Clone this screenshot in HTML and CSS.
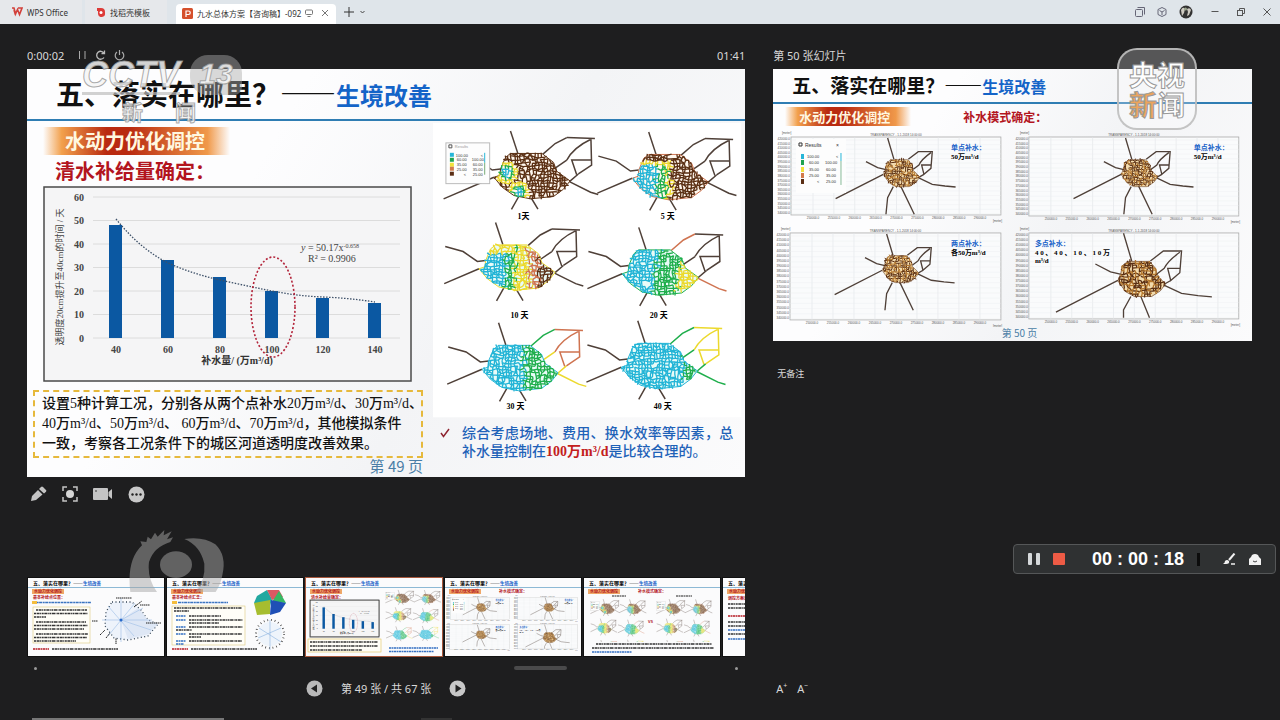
FILE: index.html
```html
<!DOCTYPE html>
<html lang="zh-CN">
<head>
  <meta charset="UTF-8" />
  <meta name="viewport" content="width=device-width, initial-scale=1.0"/>
  <title>WPS Office</title>
  <link rel="stylesheet" href="styles.css">
</head>
<body>
  <header class="topbar">
    <a class="tab" href="#">
      <svg width="12" height="10" viewBox="0 0 12 10" fill="none" stroke="#d2403a" stroke-width="1.6"><path d="M1 1h2l1.500 6L6.500 2.500 8.500 7.500 11 1H7M3 3l1.500 5"/></svg>
      <span>WPS Office</span>
    </a>
    <a class="tab" href="#">
      <svg width="10" height="10" viewBox="0 0 10 10"><path d="M1 1h4a4 4 0 0 1 4 4v1a3.500 3.500 0 0 1-7 1V4H1z" fill="#dd3b38"/><circle cx="5" cy="5.500" r="1.500" fill="#fff"/></svg>
      <span>找稻壳模板</span>
    </a>
    <a class="tab active" href="#">
      <svg width="11" height="11" viewBox="0 0 11 11"><rect width="11" height="11" rx="1.500" fill="#d5502c"/><path d="M4 9V3h2.500a1.700 1.700 0 0 1 0 3.500H4" fill="none" stroke="#fff" stroke-width="1.200"/></svg>
      <span>九水总体方案【咨询稿】-092</span>
      <svg width="8" height="8" viewBox="0 0 8 8" fill="none" stroke="#777"><rect x="0.500" y="1" width="7" height="4.500" rx="1"/><path d="M2.500 7.500h3"/></svg>
      <svg class="tab-close" width="6" height="6" viewBox="0 0 6 6" stroke="#777"><path d="M0 0l6 6M6 0L0 6"/></svg>
    </a>
    <button class="bar-btn" aria-label="新建"><svg width="10" height="10" viewBox="0 0 10 10" stroke="#333"><path d="M5 0v10M0 5h10"/></svg></button>
    <button class="bar-btn" aria-label="更多"><svg width="5" height="4" viewBox="0 0 5 4" fill="none" stroke="#444"><path d="M0.500 1l2 2 2-2"/></svg></button>
    <div class="window-btns">
      <button class="bar-btn" aria-label="窗口"><svg width="10" height="10" viewBox="0 0 10 10" fill="none" stroke="#667"><rect x="0.500" y="2.500" width="7" height="7" rx="1"/><path d="M2.500 0.500h7v7"/></svg></button>
      <button class="bar-btn" aria-label="应用"><svg width="10" height="10" viewBox="0 0 10 10" fill="none" stroke="#667"><path d="M5 0.500l4 2v5l-4 2-4-2v-5zM2.500 3.500L5 5l2.500-1.500M5 5v3"/></svg></button>
      <button class="bar-btn" aria-label="账号"><svg width="14" height="14" viewBox="0 0 14 14"><circle cx="7" cy="7" r="6.500" fill="#333"/><path d="M2 5q2-4 4-1l-1 4-2 3zM8 4q3-2 4 1l-2 5-2 1 1-4z" fill="#cfcbc2"/><circle cx="6.500" cy="4" r="1.500" fill="#9aa58c"/></svg></button>
      <button class="bar-btn" aria-label="最小化"><svg width="8" height="8" viewBox="0 0 8 8" stroke="#555"><path d="M0.500 3.500h7"/></svg></button>
      <button class="bar-btn" aria-label="还原"><svg width="8" height="8" viewBox="0 0 8 8" fill="none" stroke="#555"><rect x="0.500" y="2.500" width="5" height="5"/><path d="M2.500 2.500v-2h5v5h-2"/></svg></button>
      <button class="bar-btn" aria-label="关闭"><svg width="8" height="8" viewBox="0 0 8 8" stroke="#555"><path d="M0.500 0.500l7 7M7.500 0.500l-7 7"/></svg></button>
    </div>
  </header>

  <main class="presenter">
    <section class="current">
      <div class="status">
        <span>0:00:02</span>
        <button class="icon-btn" aria-label="暂停"><svg width="9" height="10" viewBox="0 0 9 10" stroke="#aaa" fill="none"><path d="M1.500 1v8M7 1v8"/></svg></button>
        <button class="icon-btn" aria-label="重置"><svg width="11" height="10" viewBox="0 0 11 10" stroke="#bbb" stroke-width="1.300" fill="none"><path d="M9 7.500A4 4 0 1 1 9 3M9.500 0.500v3h-3"/></svg></button>
        <button class="icon-btn" aria-label="结束"><svg width="11" height="11" viewBox="0 0 11 11" stroke="#aaa" stroke-width="1.200" fill="none"><path d="M3 2a4.300 4.300 0 1 0 5 0M5.500 0v5"/></svg></button>
        <span class="clock">01:41</span>
      </div>

      <article class="slide">
        <h1 class="slide-title">五、落实在哪里？——<span>生境改善</span></h1>
        <div class="slide-body">
          <div class="col-left">
            <h2 class="banner">水动力优化调控</h2>
            <h3 class="subhead">清水补给量确定：</h3>
            <svg class="chart" viewBox="0 0 369 196">
              <g id="chart">
                <rect x="1" y="1" width="367" height="194" fill="#f5f5f6" stroke="#4a4a4a" stroke-width="1.500"/>
                <path d="M50 11h307M50 34.500h307M50 58h307M50 81.500h307M50 105h307M50 128.500h307M50 152h307" stroke="#dcdcdc"/>
                <g fill="#0b58a2">
                  <rect x="66" y="39" width="13" height="113"/>
                  <rect x="118" y="74" width="13" height="78"/>
                  <rect x="170" y="91" width="13" height="61"/>
                  <rect x="222" y="105" width="13" height="47"/>
                  <rect x="273" y="112" width="13" height="40"/>
                  <rect x="325" y="117" width="13" height="35"/>
                </g>
                <path d="M73 33Q96 62 125 77Q150 88 177 94T229 105T280 111T332 116" fill="none" stroke="#3d5068" stroke-width="1.300" stroke-dasharray="1.500 1.500"/>
                <ellipse cx="230" cy="121" rx="22" ry="50" fill="none" stroke="#b3243a" stroke-width="1.600" stroke-dasharray="2 2"/>
                <g class="ticks" text-anchor="end">
                  <text x="41" y="15">60</text><text x="41" y="38">50</text><text x="41" y="62">40</text><text x="41" y="85">30</text><text x="41" y="109">20</text><text x="41" y="132">10</text><text x="41" y="156">0</text>
                </g>
                <g class="ticks" text-anchor="middle">
                  <text x="73" y="167">40</text><text x="125" y="167">60</text><text x="177" y="167">80</text><text x="229" y="167">100</text><text x="280" y="167">120</text><text x="332" y="167">140</text>
                </g>
                <text class="formula" x="258" y="65"><tspan font-style="italic">y</tspan> = 50.17x<tspan dy="-3" font-size="6">-0.658</tspan></text>
                <text class="formula" x="265" y="76">R² = 0.9906</text>
                <text class="axis-x" x="194" y="178" text-anchor="middle">补水量/ (万m³/d)</text>
                <text class="axis-y" text-anchor="middle" transform="translate(20 91) rotate(-90)">透明度20cm提升至40cm的时间 / 天</text>
              </g>
            </svg>
            <p class="note">设置5种计算工况，分别各从两个点补水20万m³/d、30万m³/d、<br>40万m³/d、50万m³/d、 60万m³/d、70万m³/d，其他模拟条件<br>一致，考察各工况条件下的城区河道透明度改善效果。</p>
            <p class="page-no">第 49 页</p>
          </div>
          <div class="col-right">
            <svg class="maps" viewBox="0 0 316 300">
              <rect x="2" y="2" width="310" height="296" fill="#fff"/>
              <g id="maps">
                <g class="river-map" data-day="1" transform="scale(.333)"></g>
                <g class="river-map" data-day="5" transform="translate(139 1) scale(.333)"></g>
                <g class="river-map" data-day="10" transform="translate(-15 92) scale(.333)"></g>
                <g class="river-map" data-day="20" transform="translate(129 97) scale(.333)"></g>
                <g class="river-map" data-day="30" transform="translate(-12 193) scale(.333)"></g>
                <g class="river-map" data-day="40" transform="translate(128 191) scale(.333)"></g>
                <rect x="15" y="22" width="44" height="41" fill="#fdfdfd" stroke="#bbb"/>
                <g class="legend-text">
                  <text x="24" y="27" fill="#999">Results</text>
                  <text x="25" y="36">100.00</text><text x="50" y="36">&lt;</text>
                  <text x="26" y="40">60.00</text><text x="41" y="40">100.00</text>
                  <text x="26" y="45">35.00</text><text x="42" y="45">60.00</text>
                  <text x="26" y="50">25.00</text><text x="42" y="50">35.00</text>
                  <text x="33" y="55">&lt;</text><text x="42" y="55">25.00</text>
                </g>
                <rect x="19" y="32" width="4" height="4" fill="#27b6d8"/><rect x="19" y="37" width="4" height="4" fill="#1fa350"/><rect x="19" y="42" width="4" height="4" fill="#f2e23a"/><rect x="19" y="46" width="4" height="4" fill="#d27a4a"/><rect x="19" y="51" width="4" height="4" fill="#5a2e14"/>
                <path d="M54 32v10" stroke="#27b6d8"/><path d="M54 42v12" stroke="#7a7"/>
                <path d="M18 24h3v3h-3z" fill="none" stroke="#555"/>
              </g>
              <g class="day">
                <text x="87" y="99">1天</text><text x="231" y="99">5 天</text>
                <text x="80" y="198">10 天</text><text x="220" y="198">20 天</text>
                <text x="76" y="290">30 天</text><text x="224" y="290">40 天</text>
              </g>
            </svg>
            <p class="conclusion"><svg width="10" height="10" viewBox="0 0 10 10" fill="none" stroke="#8e2430" stroke-width="1.500"><path d="M1 5l2.500 3.500L9 1"/></svg>综合考虑场地、费用、换水效率等因素，总补水量控制在<strong>100万m³/d</strong>是比较合理的。</p>
          </div>
        </div>
      </article>

      <div class="tools">
        <button class="icon-btn" aria-label="画笔"><svg width="16" height="16" viewBox="0 0 16 16" fill="#c4c4c4"><path d="M0 15l1-5 6-6 4.500 4.500-6.500 5.500zM8 3l2-2q1-1 2 0l3 3q.8.8 0 1.700L13 7.500z"/></svg></button>
        <button class="icon-btn" aria-label="聚光灯"><svg width="16" height="16" viewBox="0 0 16 16" fill="none" stroke="#c4c4c4" stroke-width="1.500"><path d="M1 5V1h4M11 1h4v4M15 11v4h-4M5 15H1v-4"/><circle cx="8" cy="8" r="4" fill="#d6d6d6" stroke="none"/></svg></button>
        <button class="icon-btn" aria-label="摄像"><svg width="20" height="14" viewBox="0 0 20 14" fill="#c4c4c4"><rect y="1" width="15" height="12" rx="1"/><path d="M15.500 5L19 2v10l-3.500-3z"/><circle cx="3" cy="4" r="1" fill="#666"/></svg></button>
        <button class="icon-btn" aria-label="更多"><svg width="17" height="17" viewBox="0 0 17 17"><circle cx="8.500" cy="8.500" r="8" fill="#c8c8c8"/><g fill="#222"><circle cx="4.500" cy="8.500" r="1.200"/><circle cx="8.500" cy="8.500" r="1.200"/><circle cx="12.500" cy="8.500" r="1.200"/></g></svg></button>
      </div>

      <div class="filmstrip">
        <button class="thumb" aria-label="第 47 张">
          <svg viewBox="0 0 136 78">
            <g id="thumb-head">
              <rect width="136" height="78" fill="#fbfbfc"/>
              <text class="thumb-title" x="5" y="7">五、落实在哪里？——<tspan fill="#1560c8" font-size="4.500">生境改善</tspan></text>
              <path d="M0 9.500h136" stroke="#5d9cc4" stroke-width=".7"/>
              <rect x="4" y="11" width="32" height="5" fill="#f0a868"/>
              <text class="thumb-banner" x="6" y="15">水动力优化调控</text>
            </g>
            <text class="thumb-sub" x="5" y="21">基本补给点位置：</text>
            <path d="M5 24.500h58" stroke="#3b74c0" stroke-width="1.400" stroke-dasharray="3 .6 2 .5"/>
            <rect x="4" y="23" width="5" height="3" fill="#f4bd3c"/>
            <rect x="5" y="29" width="57" height="36" fill="#fffef8" stroke="#dcc97c" stroke-width=".6"/>
            <path class="thumb-lines" d="M8 32h51M6 35.500h54M6 39h12M8 44h50M6 47.500h54M6 51h50M8 56h52M6 59.500h53M6 63h42"/>
            <path d="M84 24l20 0 9 8 7 10 10 4-10 12-20 4-14-2-9-12 1-14z" fill="#eef3fb" stroke="#345" stroke-width="1.300" stroke-dasharray="1 2.500"/>
            <path d="M93 42l17-12 10 12 10 4-10 10-20 5z" fill="#d9e3f4" opacity=".8"/>
            <path d="M93 20v44M74 42h50M80 28l26 30M107 25L80 58M93 42l22-12M93 42l30 10" stroke="#9cbde6" stroke-width=".6"/>
            <path d="M88 20h16M112 27h10M118 45h15M64 43h6M72 57l5-5M78 60l4-5M88 66v-6M106 29l8-6" stroke="#222" stroke-dasharray="1.500 .5"/>
            <circle cx="93" cy="42" r="1.500" fill="#2869ca"/>
            <path d="M5 71h16" stroke="#b61c24" stroke-width="1.500" stroke-dasharray="2 .5"/><path class="thumb-lines" d="M24 71h66"/>
          </svg>
        </button>
        <button class="thumb" aria-label="第 48 张">
          <svg viewBox="0 0 136 78">
            <use href="#thumb-head"/>
            <text class="thumb-sub" x="5" y="21">基本补给点汇总：</text>
            <path d="M11 24.500h50" stroke="#3b74c0" stroke-width="1.400" stroke-dasharray="3 .6 2 .5"/>
            <rect x="5" y="23" width="5" height="3" fill="#f4bd3c"/>
            <rect x="5" y="28" width="73" height="39" fill="#fffef8" stroke="#dcc97c" stroke-width=".6"/>
            <path class="thumb-lines" d="M7 30h68M7 33h15M22 38h32M22 42h54M22 45h30M22 49h54M9 52h16M22 56h53M22 59h12M22 63h53"/>
            <path d="M9 38h10M9 42h10M9 49h10M9 56h10M9 63h10M9 66h8" stroke="#3470c2" stroke-width="1.300" stroke-dasharray="2 .5"/>
            <path d="M90 18l10-6 5 9-2 7-16-3z" fill="#22a8a0"/><path d="M100 12l12 0 4 7-11 3z" fill="#da5963"/>
            <path d="M112 13l7 12-14-1z" fill="#37b863"/><path d="M104 22l15 3-6 9-10 3z" fill="#1f4fb6"/><path d="M87 25l16-3 0 14-13 1z" fill="#a6bd2f"/>
            <circle cx="103" cy="56" r="12" fill="#eef4fb"/><circle cx="103" cy="56" r="14" fill="none" stroke="#333" stroke-width="2" stroke-dasharray=".7 3"/>
            <path d="M103 42v30M92 50l22 14M91 60l23-10" stroke="#8ab1df" stroke-width=".6"/>
            <path d="M5 71h16" stroke="#b61c24" stroke-width="1.500" stroke-dasharray="2 .5"/><path class="thumb-lines" d="M24 71h66"/>
          </svg>
        </button>
        <button class="thumb selected" aria-label="第 49 张">
          <svg viewBox="0 0 136 78">
            <use href="#thumb-head"/>
            <text class="thumb-sub" x="5" y="21">清水补给量确定：</text>
            <use href="#chart" transform="translate(4 22) scale(.189)"/>
            <rect x="4" y="22" width="69" height="37" fill="none" stroke="#333" stroke-width=".8"/>
            <rect x="2" y="61" width="73" height="13" fill="#fffef8" stroke="#e2c35b" stroke-width=".6"/>
            <path class="thumb-lines" d="M4 64h68M4 68h68M4 72h52"/>
            <use href="#maps" transform="translate(77 10) scale(.189)"/>
            <path d="M83 70h49M83 73.500h45" stroke="#3470c2" stroke-width="1.300" stroke-dasharray="2 .5"/>
          </svg>
        </button>
        <button class="thumb" aria-label="第 50 张">
          <svg viewBox="0 0 136 78">
            <use href="#thumb-head"/>
            <text class="thumb-sub" x="54" y="15">补水模式确定：</text>
            <use href="#plots" transform="translate(0 17) scale(.284)"/>
          </svg>
        </button>
        <button class="thumb" aria-label="第 51 张">
          <svg viewBox="0 0 136 78">
            <use href="#thumb-head"/>
            <text class="thumb-sub" x="54" y="15">补水模式确定：</text>
            <path d="M28 18h14M92 18h16" stroke="#222" stroke-dasharray="2 .5"/>
            <svg x="4" y="19" width="60" height="45" viewBox="0 0 316 212" preserveAspectRatio="none"><use href="#maps"/></svg>
            <svg x="70" y="19" width="60" height="45" viewBox="0 0 316 212" preserveAspectRatio="none"><use href="#maps"/></svg>
            <text class="thumb-sub" x="64" y="45">VS</text>
            <path class="thumb-lines" d="M12 66h116M8 70h122"/>
            <path d="M8 74h40" stroke="#3470c2" stroke-width="1.300" stroke-dasharray="2 .5"/>
          </svg>
        </button>
        <button class="thumb" aria-label="第 52 张">
          <svg viewBox="0 0 136 78">
            <use href="#thumb-head"/>
            <text class="thumb-sub" x="5" y="22">调控方案汇总：</text>
            <path class="thumb-lines" d="M5 26h60M5 30h60M5 44h60M5 48h60M5 56h60"/>
            <path d="M5 38h30" stroke="#b61c24" stroke-width="1.500" stroke-dasharray="2 .5"/>
            <path d="M5 52h30M5 61h30" stroke="#3470c2" stroke-width="1.300" stroke-dasharray="2 .5"/>
          </svg>
        </button>
      </div>

      <div class="scrollbar"><i></i><b></b><i></i></div>

      <nav class="pager">
        <button class="icon-btn" aria-label="上一张"><svg width="17" height="17" viewBox="0 0 17 17"><circle cx="8.500" cy="8.500" r="8" fill="#b9b9b9"/><path d="M11 4.500v8l-6-4z" fill="#222"/></svg></button>
        <span>第 49 张 / 共 67 张</span>
        <button class="icon-btn" aria-label="下一张"><svg width="17" height="17" viewBox="0 0 17 17"><circle cx="8.500" cy="8.500" r="8" fill="#c8c8c8"/><path d="M6.500 4.500v8l6-4z" fill="#222"/></svg></button>
      </nav>
    </section>

    <section class="next">
      <div class="status">第 50 张幻灯片</div>
      <article class="slide slide-small">
        <h2 class="slide-title">五、落实在哪里？——<span>生境改善</span></h2>
        <div class="small-heads">
          <h3 class="banner">水动力优化调控</h3>
          <h3 class="subhead">补水模式确定：</h3>
        </div>
        <svg class="plots" viewBox="0 0 479 198">
          <g id="plots">
            <g class="plot" data-x="18" data-y="8" data-w="210" data-h="78" data-scale="1"></g>
            <g class="plot" data-x="256" data-y="8" data-w="210" data-h="79" data-scale="1"></g>
            <g class="plot" data-x="17" data-y="104" data-w="211" data-h="87" data-scale="1"></g>
            <g class="plot" data-x="256" data-y="104" data-w="210" data-h="86" data-scale="1.300"></g>
            <rect x="23" y="10" width="50" height="54" fill="#fdfdfd"/>
            <g class="legend-text">
              <text x="32" y="18" font-size="5">Results</text><text x="63" y="18" font-size="5">×</text>
              <text x="34" y="29">100.00</text><text x="63" y="29">&lt;</text>
              <text x="36" y="35">60.00</text><text x="52" y="35">100.00</text>
              <text x="36" y="42">35.00</text><text x="53" y="42">60.00</text>
              <text x="36" y="48">25.00</text><text x="53" y="48">35.00</text>
              <text x="44" y="54">&lt;</text><text x="53" y="54">25.00</text>
            </g>
            <path d="M26 14h3v3h-3z" fill="none" stroke="#333"/>
            <rect x="28" y="25" width="3" height="5" fill="#27b6d8"/><rect x="28" y="31" width="3" height="5" fill="#1fa350"/><rect x="28" y="38" width="3" height="5" fill="#f2e23a"/><rect x="28" y="44" width="3" height="5" fill="#d27a4a"/><rect x="28" y="50" width="3" height="5" fill="#5a2e14"/>
            <path d="M68 24v8" stroke="#27b6d8"/><path d="M68 32v24" stroke="#8b9"/>
            <g class="plot-label">
              <text x="178" y="21" fill="#1560c8">单点补水：</text><text x="178" y="30">50万m³/d</text>
              <text x="421" y="21" fill="#1560c8">单点补水：</text><text x="421" y="30">50万m³/d</text>
              <text x="178" y="117" fill="#1560c8">两点补水：</text><text x="178" y="126">各50万m³/d</text>
              <text x="262" y="117" fill="#1560c8">多点补水：</text><text x="262" y="126">4 0 、 4 0 、 1 0 、 1 0 万</text><text x="262" y="134">m³/d</text>
            </g>
          </g>
        </svg>
        <p class="page-no">第 50 页</p>
      </article>
      <p class="remark">无备注</p>
      <div class="font-size">
        <button aria-label="增大字号">A<sup>+</sup></button>
        <button aria-label="减小字号">A<sup>−</sup></button>
      </div>
    </section>
  </main>

  <div class="cctv">
    <div class="cctv-top"><span class="cctv-name">CCTV</span><span class="cctv-num">13</span></div>
    <div class="cctv-sub"><span>新</span><span>闻</span></div>
  </div>

  <div class="ysxw">央视<br><em>新</em>闻</div>

  <svg class="eye" viewBox="320 20 300 220">
    <path d="M330 215Q318 120 365 75l-5-12 18 2 4-16 10 8 12-20 8 12 20-20-2 16 24-12-14 24 18-6-8 14Q400 80 386 125 380 175 410 215z"/>
    <path d="M492 56Q550 48 585 72 620 105 606 165 600 195 586 215H525Q556 180 552 130 540 76 492 56z"/>
    <ellipse cx="467" cy="133" rx="48" ry="40"/>
  </svg>

  <div class="recorder">
    <button class="icon-btn" aria-label="暂停录制"><svg width="12" height="12" viewBox="0 0 12 12" fill="#d5d8da"><rect width="4" height="12" rx="1"/><rect x="8" width="4" height="12" rx="1"/></svg></button>
    <button class="icon-btn" aria-label="停止录制"><svg width="12" height="12" viewBox="0 0 12 12"><rect width="12" height="12" rx="1" fill="#ee5b45"/></svg></button>
    <span class="rec-time">00 : 00 : 18</span>
    <i class="rec-caret"></i>
    <button class="icon-btn rec-pen" aria-label="标注"><svg width="13" height="12" viewBox="0 0 13 12" fill="none" stroke="#f2f2f2" stroke-width="2"><path d="M11.500 0.500L6 7"/><path d="M8 11h4" stroke-width="1.500"/><path d="M0 11q2-1 2-3 2-2 4 0 1 3-3 3z" fill="#f2f2f2" stroke="none"/></svg></button>
    <button class="icon-btn" aria-label="截图"><svg width="12" height="11" viewBox="0 0 12 11" fill="#f2f2f2"><path d="M0 11V5l2-2 1-2q3-2 6 0l1 2 2 2v6z"/><path d="M4 7q2 2 4 0" fill="none" stroke="#444"/></svg></button>
  </div>

  <footer class="edge"><i></i><b></b></footer>

  <script src="script.js"></script>
</body>
</html>
```
FILE: styles.css
```css
* {
  box-sizing: border-box;
}

body {
  margin: 0;
  min-height: 100vh;
  display: flex;
  flex-direction: column;
  position: relative;
  background: #1e1e1f;
  color: #d8d8d8;
  font-family: "Noto Sans", "Noto Sans CJK SC", sans-serif;
  font-size: 11px;
}

h1, h2, h3, p {
  margin: 0;
}

svg {
  display: block;
  flex-shrink: 0;
}

button {
  border: none;
  padding: 0;
  background: none;
  color: inherit;
  font: inherit;
  cursor: pointer;
}

/* top bar */
.topbar {
  display: flex;
  height: 24px;
  align-items: center;
  background: #dfe5ea;
}

.tab {
  display: flex;
  align-items: center;
  gap: 4px;
  height: 24px;
  width: 82px;
  padding: 0 8px 0 11px;
  margin-right: 3px;
  background: #e6e8eb;
  color: #333;
  font-size: 8px;
  text-decoration: none;
  white-space: nowrap;
}

.tab.active {
  width: 160px;
  margin: 4px 8px 0 6px;
  height: 20px;
  padding: 0 6px 2px 6px;
  background: #fff;
  border-radius: 4px 4px 0 0;
}

.tab-close {
  margin-left: 5px;
}

.bar-btn {
  margin-right: 6px;
}

.window-btns {
  display: flex;
  align-items: center;
  gap: 18px;
  margin-left: auto;
  padding-right: 9px;
}

.window-btns .bar-btn {
  margin: 0;
}

.window-btns .bar-btn:nth-child(2) {
  margin: 0 -6px;
}

/* presenter */
.presenter {
  flex: 1;
  display: grid;
  grid-template-columns: 3fr 2fr;
  gap: 28px;
  padding: 0 28px 0 27px;
}

.current, .next {
  display: flex;
  flex-direction: column;
  min-width: 0;
}

.status {
  display: flex;
  align-items: center;
  gap: 8px;
  height: 45px;
  padding-top: 17px;
}

.status span:first-child {
  margin-right: 6px;
}

.clock {
  margin-left: auto;
}

.slide {
  background: linear-gradient(120deg, #fdfdfe 30%, #f3f4f6 60%, #fbfbfc);
  color: #111;
  font-family: "Noto Sans CJK SC", sans-serif;
}

.slide-title {
  padding-left: 29px;
  border-bottom: 2px solid #2f7db3;
  font-size: 28px;
  line-height: 49px;
  font-weight: 700;
  white-space: nowrap;
}

.slide-title span {
  color: #1464c8;
  font-size: 24px;
}

.slide-body {
  display: grid;
  grid-template-columns: 9fr 7fr;
}

.col-left {
  padding-top: 6px;
}

.banner {
  width: 187px;
  margin-left: 16px;
  padding-left: 22px;
  background: linear-gradient(90deg, #fff0, #f2a04c 10%, #b92a10 34%, #b92a10 46%, #f0994a 88%, #fff0);
  color: #fff8e0;
  font-size: 20px;
  line-height: 28px;
}

.subhead {
  padding-left: 28px;
  color: #b3151e;
  font-size: 20px;
  line-height: 31px;
}

.chart {
  width: 369px;
  max-width: 100%;
  margin-left: 16px;
}

.ticks {
  fill: #444;
  font: bold 10px "Liberation Serif", serif;
}

.formula {
  fill: #444;
  font: 10px "Liberation Serif", serif;
}

.axis-x {
  fill: #333;
  font: bold 10px "Liberation Serif", "Noto Sans CJK SC", serif;
}

.axis-y {
  fill: #444;
  font: 9px "Liberation Serif", "Noto Sans CJK SC", serif;
}

.note {
  width: 390px;
  margin: 8px 0 0 6px;
  padding: 2px 0 2px 7px;
  border: 2px dashed #e6b93c;
  font-family: "Liberation Serif", "Noto Sans CJK SC", serif;
  font-size: 14px;
  line-height: 20px;
  font-weight: 500;
  white-space: nowrap;
}

.page-no {
  padding: 0 8px 3px 0;
  color: #4a7ea6;
  font-size: 15px;
  line-height: 16px;
  text-align: right;
}

.maps {
  width: 100%;
}

.day {
  font: bold 8px "Liberation Serif", "Noto Sans CJK SC", serif;
}

.legend-text {
  fill: #333;
  font-family: "Liberation Sans", sans-serif;
  font-size: 4px;
}

.conclusion {
  position: relative;
  padding: 6px 12px 0 31px;
  color: #1f62b8;
  font-family: "Liberation Serif", "Noto Sans CJK SC", serif;
  font-size: 14px;
  line-height: 18px;
  font-weight: 500;
  text-align: justify;
}

.conclusion svg {
  position: absolute;
  left: 9px;
  top: 9px;
}

.conclusion strong {
  color: #c3201c;
}

.tools {
  display: flex;
  align-items: center;
  gap: 15px;
  height: 34px;
  padding-left: 4px;
}

/* thumbnails */
.filmstrip {
  display: flex;
  gap: 3px;
  margin-top: 66px;
  padding: 1px 0;
  overflow: hidden;
}

.thumb {
  flex: 0 0 136px;
  outline: 1px solid #111;
}

.thumb:first-child {
  margin-left: 1px;
}

.thumb.selected {
  outline: 1px solid #a8583c;
}

.thumb-title {
  font: bold 5px "Noto Sans CJK SC", sans-serif;
}

.thumb-banner {
  fill: #b3151e;
  font: bold 4px "Noto Sans CJK SC", sans-serif;
}

.thumb-sub {
  fill: #b3151e;
  font: bold 4px "Noto Sans CJK SC", sans-serif;
}

.thumb-lines {
  stroke: #333;
  stroke-width: 1.3;
  stroke-dasharray: 2 .6 3 .5 1 .6;
}

.scrollbar {
  display: flex;
  align-items: center;
  justify-content: space-between;
  height: 22px;
  padding: 0 7px;
}

.scrollbar i {
  width: 3px;
  height: 3px;
  border-radius: 50%;
  background: #999;
}

.scrollbar b {
  width: 53px;
  height: 4px;
  margin-left: 309px;
  border-radius: 2px;
  background: #4a4a4b;
}

.pager {
  display: flex;
  align-items: center;
  justify-content: center;
  gap: 18px;
  height: 18px;
}

/* next slide */
.slide-small .slide-title {
  padding-left: 19px;
  font-size: 19px;
  line-height: 32px;
}

.slide-small .slide-title span {
  font-size: 16px;
}

.small-heads {
  display: flex;
  align-items: center;
  gap: 52px;
  height: 25px;
}

.slide-small .banner {
  width: 126px;
  margin-left: 12px;
  padding-left: 14px;
  font-size: 13px;
  line-height: 19px;
}

.slide-small .subhead {
  padding: 0;
  font-size: 12px;
  line-height: 19px;
}

.plots {
  width: 100%;
}

.plot-label {
  font: bold 7px "Liberation Serif", "Noto Sans CJK SC", serif;
}

.plot-ticks {
  fill: #555;
  font: 3px "Liberation Sans", sans-serif;
}

.slide-small .page-no {
  padding: 0 0 2px 14px;
  font-size: 10px;
  line-height: 12px;
  text-align: center;
}

.remark {
  padding: 26px 0 0 4px;
  font-size: 9px;
  line-height: 14px;
}

.font-size {
  display: flex;
  gap: 10px;
  margin-top: auto;
  padding: 0 0 24px 3px;
}

.font-size sup {
  font-size: 7px;
  line-height: 0;
}

/* broadcaster marks */
.cctv {
  position: absolute;
  left: 82px;
  top: 55px;
  color: rgba(245, 245, 245, .85);
  -webkit-text-stroke: 1px rgba(150, 150, 150, .8);
}

.cctv-top {
  display: flex;
  gap: 10px;
  font-family: "Liberation Sans", sans-serif;
  font-style: italic;
  font-weight: 700;
}

.cctv-name {
  height: 40px;
  border-bottom: 3px solid rgba(190, 190, 190, .7);
  font-size: 36px;
  line-height: 40px;
}

.cctv-num {
  width: 52px;
  border-radius: 18px 18px 8px 18px;
  background: rgba(170, 170, 170, .45);
  font-size: 30px;
  line-height: 38px;
  text-align: center;
}

.cctv-sub {
  display: flex;
  gap: 32px;
  padding-left: 40px;
  font-family: "Noto Sans CJK SC", sans-serif;
  font-size: 21px;
  line-height: 32px;
  font-weight: 700;
}

.ysxw {
  position: absolute;
  right: 83px;
  top: 48px;
  padding: 9px 10px;
  border: 2px solid rgba(190, 190, 190, .9);
  border-radius: 20px;
  background: rgba(255, 255, 255, .25);
  color: #fff;
  font-family: "Noto Sans CJK SC", sans-serif;
  font-size: 28px;
  line-height: 30px;
  font-weight: 700;
  -webkit-text-stroke: 1px #999;
}

.ysxw em {
  color: #eba45c;
  font-style: normal;
}

.eye {
  position: absolute;
  left: 127px;
  top: 527px;
  width: 100px;
  fill: rgba(165, 165, 165, .5);
}

.recorder {
  position: absolute;
  right: 4px;
  top: 544px;
  display: flex;
  align-items: center;
  gap: 13px;
  height: 30px;
  padding: 0 14px;
  border: 1px solid #555758;
  border-radius: 4px;
  background: #2f3132;
}

.rec-time {
  margin-left: 14px;
  color: #fff;
  font-family: "Liberation Sans", sans-serif;
  font-size: 18px;
  font-weight: 700;
}

.rec-caret {
  width: 3px;
  height: 13px;
  background: #0c0c0c;
}

.rec-pen {
  margin-left: 10px;
}

.edge {
  position: absolute;
  left: 32px;
  bottom: 0;
  display: flex;
  gap: 197px;
}

.edge i {
  width: 192px;
  height: 2px;
  background: #777;
}

.edge b {
  width: 31px;
  height: 2px;
  background: #333;
}
```
FILE: script.js
```js
const NS = 'http://www.w3.org/2000/svg';
const CYAN = '#22b4d6', GREEN = '#1fae4c', YELLOW = '#ecd92c', SALMON = '#cf7350', BROWN = '#5b3014';
const TRUNK = '#4f4038';

// outline of the city river network
const blob = [[210,145],[225,110],[240,98],[335,98],[370,125],[380,152],[420,181],[400,206],[370,228],[300,235],[250,225],[215,200],[190,170],[208,164]];

// zones: colour up to a given x, left to right
const zones = {
  5: [[268, CYAN], [292, GREEN], [308, YELLOW], [999, BROWN]],
  10: [[272, CYAN], [298, GREEN], [342, YELLOW], [372, SALMON], [999, BROWN]],
  20: [[290, CYAN], [365, GREEN], [999, YELLOW]],
  30: [[318, CYAN], [999, GREEN]],
  40: [[382, CYAN], [999, GREEN]]
};

let seed = 7;
function rnd() {
  seed = (seed * 16807) % 2147483647;
  return seed / 2147483647;
}

function add(parent, tag, attrs, text) {
  const el = document.createElementNS(NS, tag);
  for (const k in attrs) el.setAttribute(k, attrs[k]);
  if (text) el.textContent = text;
  parent.appendChild(el);
}

function inside(x, y, poly) {
  let hit = false;
  for (let i = 0, j = poly.length - 1; i < poly.length; j = i++) {
    const [xi, yi] = poly[i], [xj, yj] = poly[j];
    if ((yi > y) !== (yj > y) && x < (xj - xi) * (y - yi) / (yj - yi) + xi) hit = !hit;
  }
  return hit;
}

function colorAt(day, x, y) {
  if (day === 1) {
    const d = Math.min(Math.hypot(x - 228, y - 156), Math.hypot(x - 265, y - 213) + 3);
    return d < 14 ? CYAN : d < 22 ? GREEN : d < 34 ? YELLOW : BROWN;
  }
  if (day === 5 && y < 130) return y < 118 ? BROWN : x < 310 ? YELLOW : BROWN;
  if (day === 10 && y < 125 && x < 300) return YELLOW;
  const v = x + (rnd() - 0.5) * 26 + (day === 20 ? (y - 166) * 0.2 : 0);
  return zones[day].find(z => v < z[0])[1];
}

// jittered grid of streets clipped by the outline
function mesh(g, poly, step, width, pick) {
  const pts = {};
  const at = (i, j) => pts[i + ',' + j] || (pts[i + ',' + j] = [i * step + (rnd() - 0.5) * step * 0.9, j * step + (rnd() - 0.5) * step * 0.9]);
  const paths = {};
  const xs = poly.map(p => p[0]), ys = poly.map(p => p[1]);
  for (let i = Math.floor(Math.min(...xs) / step); i * step < Math.max(...xs); i++) {
    for (let j = Math.floor(Math.min(...ys) / step); j * step < Math.max(...ys); j++) {
      const a = at(i, j);
      for (const b of [at(i + 1, j), at(i, j + 1)]) {
        const mx = (a[0] + b[0]) / 2, my = (a[1] + b[1]) / 2;
        if (rnd() < 0.1 || !inside(mx, my, poly)) continue;
        const c = pick(mx, my);
        paths[c] = (paths[c] || '') + `M${a[0].toFixed(1)} ${a[1].toFixed(1)}L${b[0].toFixed(1)} ${b[1].toFixed(1)}`;
      }
    }
  }
  for (const c in paths) add(g, 'path', { d: paths[c], stroke: c, 'stroke-width': width, fill: 'none' });
}

document.querySelectorAll('.river-map').forEach(g => {
  const day = +g.dataset.day;
  const line = (d, c) => add(g, 'path', { d, stroke: c || TRUNK, 'stroke-width': 4.5, fill: 'none' });
  const upper = day === 30 ? YELLOW : day === 40 ? GREEN : day === 20 ? SALMON : TRUNK;
  const loop = day === 30 ? SALMON : day === 40 ? YELLOW : TRUNK;
  line('M240 30L262 97');
  line('M210 145L185 148L142 118L88 103');
  line(day === 1 ? 'M190 170L38 235' : 'M190 170L85 215');
  line('M265 228L243 267M300 228L323 266');
  line('M338 100L375 68L410 50', day === 30 ? GREEN : upper);
  line('M410 50L495 53M483 54L485 133L445 160M485 118H425L440 162M483 55Q430 80 410 118', loop);
  line('M410 118L375 142M445 160L418 183', day === 20 ? TRUNK : upper);
  line('M418 183L482 215L505 222', upper);
  const edge = { 1: BROWN, 5: SALMON, 10: YELLOW, 20: GREEN, 30: CYAN, 40: CYAN }[day];
  add(g, 'polygon', { points: blob.join(' '), fill: day > 5 ? '#e9fbf8' : '#fff7ee', stroke: edge, 'stroke-width': 3 });
  mesh(g, blob, 9, 4, (x, y) => colorAt(day, x, y));
});

document.querySelectorAll('.plot').forEach(g => {
  const x = +g.dataset.x, y = +g.dataset.y, w = +g.dataset.w, h = +g.dataset.h, s = +g.dataset.scale;
  add(g, 'rect', { x, y, width: w, height: h, fill: '#fafbfc', stroke: '#aaa', 'stroke-width': 0.8 });
  for (let i = 0; i < 9; i++) {
    const px = x + 22 + i * (w - 22) / 9;
    add(g, 'path', { d: `M${px} ${y}v${h}`, stroke: '#e1e4e8', 'stroke-width': 0.6 });
    add(g, 'text', { x: px, y: y + h + 4, class: 'plot-ticks', 'text-anchor': 'middle' }, (250 + i * 5) + '000.0');
  }
  for (let i = 0; i < 17; i++) {
    const py = y + 3 + i * (h - 4) / 16;
    add(g, 'path', { d: `M${x} ${py}h${w}`, stroke: '#eceef0', 'stroke-width': 0.4 });
    add(g, 'text', { x: x - 1, y: py, class: 'plot-ticks', 'text-anchor': 'end' }, (420 - i * 5) + '000.0');
  }
  add(g, 'text', { x: x - 9, y: y - 3, class: 'plot-ticks' }, '[meter]');
  add(g, 'text', { x: x + w - 8, y: y + h + 7, class: 'plot-ticks' }, '[meter]');
  add(g, 'text', { x: x + w / 2, y: y - 1, class: 'plot-ticks', 'text-anchor': 'middle' }, 'TRANSPARENCY - 1-1-2018 14:00:00');

  // drawing units are a third of a pixel, origin at the frame corner
  const m = document.createElementNS(NS, 'g');
  m.setAttribute('transform', `translate(${x + (s > 1 ? -31 : 0)} ${y - (s > 1 ? 1 : 0)}) scale(${s / 3})`);
  g.appendChild(m);
  const south = s > 1 ? 'M307 149L290 180V198M330 149L350 198' : 'M307 149L290 182L285 232M330 149L370 232';
  add(m, 'path', {
    d: 'M290 3L309 67M225 74L260 92L285 98M277 112L134 185M382 122L424 142L462 147L494 150M352 67L382 44H424L420 94L399 112L392 84H420M420 47Q392 67 384 84L367 97M399 112L382 122' + south,
    fill: 'none', stroke: TRUNK, 'stroke-width': 4 / s
  });
  const city = [[284,95],[287,78],[300,68],[350,68],[364,84],[367,100],[387,120],[375,136],[355,149],[315,149],[295,138],[277,113]];
  add(m, 'polygon', { points: city.join(' '), fill: '#f3dcae', stroke: BROWN, 'stroke-width': 1.5 });
  mesh(m, city, 6.5, 3, () => rnd() < 0.35 ? '#b4762c' : BROWN);
});
```
